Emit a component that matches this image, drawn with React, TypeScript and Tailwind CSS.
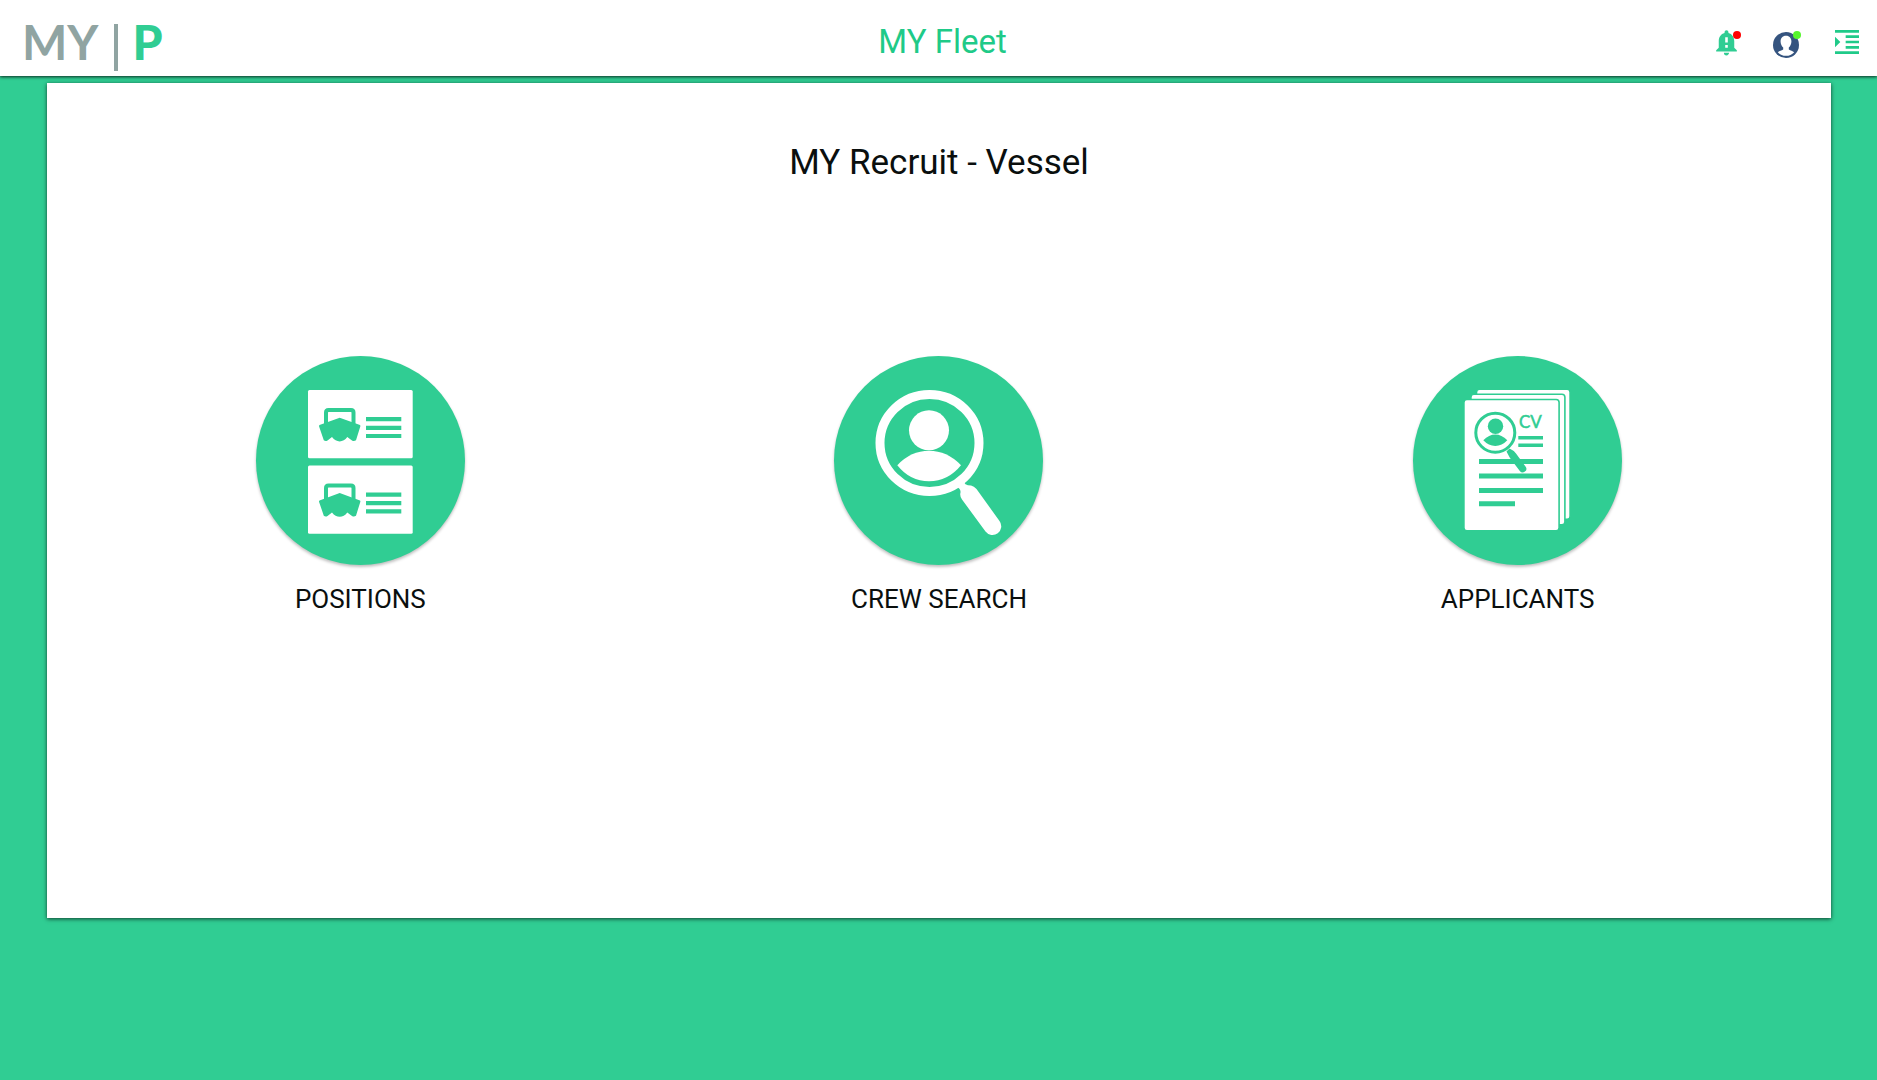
import type { ReactNode } from "react";
import { MdFormatIndentIncrease, MdNotificationImportant } from "react-icons/md";

interface ITile {
  label: string;
  icon: ReactNode;
}

const Ship = ({ y }: { y: number }) => (
  <g transform={`translate(0 ${y})`}>
    <rect x="52" y="34" width="104.7" height="68.3" rx="1.5" fill="#fff" />
    <path
      d="M70 69V56.5Q70 54 72.5 54H95Q97.5 54 97.5 56.5V69"
      fill="none"
      stroke="#30cd93"
      strokeWidth="4"
    />
    <path
      d="M63.5 69 83.7 61.7 104 69Q104.6 69.5 104.3 70.5L100 84.3Q98 85.6 96 84.5L91.3 81Q88 85.4 83.7 85.4T76 81L71.5 84.5Q69.5 85.6 67.8 84.3L63.1 70.5Q62.8 69.5 63.5 69Z"
      fill="#30cd93"
    />
    <path
      d="M110 63.2h35.3M110 71.8h35.3M110 80h35.3"
      stroke="#30cd93"
      strokeWidth="4.2"
    />
  </g>
);

const PositionsIcon = () => (
  <svg viewBox="0 0 209 209" className="size-full" aria-hidden="true">
    <Ship y={0} />
    <Ship y={75.4} />
  </svg>
);

const SearchIcon = () => (
  <svg viewBox="0 0 209 209" className="size-full" aria-hidden="true">
    <ellipse
      cx="95.5"
      cy="87"
      rx="49.5"
      ry="48.5"
      fill="none"
      stroke="#fff"
      strokeWidth="9"
    />
    <circle cx="95" cy="74.3" r="20" fill="#fff" />
    <path
      d="M63.3 109.2Q77 94.8 95 94.8T127 109.2Q114 125.2 95 125.2T63.3 109.2Z"
      fill="#fff"
    />
    <path
      d="M122 130 129 124Q130 129.5 137 129.5Q140 130 142.5 133L165.5 165A8.7 8.7 0 0 1 151.5 175.5L128 143.5Q125.5 140 126.5 136.5Q127 133 122 130Z"
      fill="#fff"
    />
  </svg>
);

const ApplicantsIcon = () => (
  <svg viewBox="0 0 209 209" className="size-full" aria-hidden="true">
    <g fill="#fff" stroke="#30cd93" strokeWidth="1.6">
      <rect x="63.5" y="33.2" width="93.6" height="130" rx="3" />
      <rect x="57.9" y="38.2" width="94" height="130.6" rx="3" />
      <rect x="50.9" y="43.5" width="95.2" height="131.2" rx="3" />
    </g>
    <circle
      cx="82.3"
      cy="76.7"
      r="19.5"
      fill="none"
      stroke="#30cd93"
      strokeWidth="3"
    />
    <g fill="#30cd93">
      <circle cx="82.5" cy="70.2" r="7.7" />
      <path d="M70.3 84.3Q76 78.5 82.3 78.5T94.3 84.3Q89 90 82.3 90T70.3 84.3Z" />
      <path d="M93.5 95.5 96.5 92.5Q101 94.5 103 97.5L112.5 110.5A3.6 3.6 0 0 1 106.8 115L97 102Q95 98.5 93.5 95.5Z" />
      <text
        x="106"
        y="72"
        fontSize="17"
        stroke="#30cd93"
        strokeWidth="0.5"
        className="font-['Lato',sans-serif]"
      >
        CV
      </text>
    </g>
    <path
      d="M105.3 81.7H130M105.3 89.2H130"
      stroke="#30cd93"
      strokeWidth="3.6"
    />
    <path
      d="M66 105.5H130M66 120H130M66 134.5H130M66 147.7H102"
      stroke="#30cd93"
      strokeWidth="5"
    />
  </svg>
);

const AvatarIcon = () => (
  <svg viewBox="0 0 26 26" className="size-[26px]" aria-hidden="true">
    <circle cx="13" cy="13" r="13" fill="#35547f" />
    <path
      d="M13 3.8C9.3 3.8 7.5 6.5 7.6 9.8C7.7 12.3 8.7 14.2 10.2 15.6V17.5C8.5 18.7 6.3 19 4.8 20.2A11 11 0 0 0 21.2 20.2C19.7 19 17.5 18.7 15.8 17.5V15.6C17.3 14.2 18.3 12.3 18.4 9.8C18.5 6.5 16.7 3.8 13 3.8Z"
      fill="#fff"
    />
  </svg>
);

const tiles: ITile[] = [
  { label: "POSITIONS", icon: <PositionsIcon /> },
  { label: "CREW SEARCH", icon: <SearchIcon /> },
  { label: "APPLICANTS", icon: <ApplicantsIcon /> },
];

const Header = () => (
  <header className="relative grid h-[76px] grid-cols-[1fr_auto_1fr] items-center bg-white pl-[22px] pr-[14px] shadow-[0_1px_3px_rgba(0,0,0,0.8)]">
    <a
      href="#"
      className="flex items-center pt-2 font-['Lato',sans-serif] text-[48px] font-bold leading-[56px] text-[#90a4a2]"
    >
      MY
      <span className="ml-4 mt-2.5 h-[47px] w-1 bg-[#90a4a2]" />
      <span className="ml-3.5 font-black text-[#30cd93]">P</span>
    </a>

    <h1 className="pt-2 text-[33px] leading-[40px] text-[#1fca88]">MY Fleet</h1>

    <nav className="flex items-center justify-end gap-7 pt-2">
      <button
        type="button"
        aria-label="Notifications"
        className="relative flex size-8 items-center text-[#30cd93]"
      >
        <MdNotificationImportant size={31} />
        <span className="absolute right-0.5 top-[5px] size-2 rounded-full bg-[#ff0000]" />
      </button>
      <button
        type="button"
        aria-label="Profile"
        className="relative flex size-8 items-center pl-0.5 pt-1.5"
      >
        <AvatarIcon />
        <span className="absolute right-0.5 top-[5px] size-2 rounded-full bg-[#56f52c]" />
      </button>
      <button type="button" aria-label="Menu" className="text-[#20ca89]">
        <MdFormatIndentIncrease size={32} />
      </button>
    </nav>
  </header>
);

const App = () => (
  <div className="min-h-screen bg-[#30cd93] font-['Roboto',sans-serif]">
    <Header />

    <main className="ml-[47px] mr-[46px] mt-[7px] bg-white px-6 pb-[303px] pt-[59px] shadow-[0_1px_4px_rgba(0,0,0,0.7)]">
      <h2 className="text-center text-[35px] leading-[42px] text-[#0a0f0e]">
        MY Recruit - Vessel
      </h2>

      <div className="mt-[172px] grid grid-cols-3">
        {tiles.map(({ label, icon }) => (
          <button
            key={label}
            type="button"
            className="flex flex-col items-center justify-self-center"
          >
            <span className="size-[209px] rounded-full bg-[#30cd93] shadow-[0_2px_3px_rgba(0,0,0,0.25)]">
              {icon}
            </span>
            <span className="mt-[18px] text-[26px] leading-8 text-[#0a0f0e]">
              {label}
            </span>
          </button>
        ))}
      </div>
    </main>
  </div>
);

export default App;
